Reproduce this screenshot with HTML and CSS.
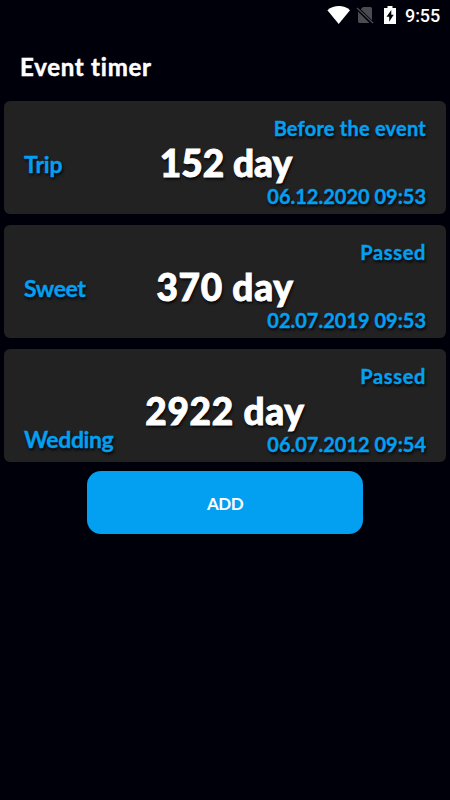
FILE: index.html
```html
<!DOCTYPE html>
<html lang="en">
<head>
<meta charset="utf-8">
<meta name="viewport" content="width=device-width, initial-scale=1">
<title>Event timer</title>
<link rel="stylesheet" href="styles.css">
</head>
<body>
<div class="status">
  <svg class="wifi" width="24" height="18" viewBox="0 0 24 18"><path fill="#fff" d="M.4 4.200C7-1.300 17-1.300 23 4.200L11.700 18Z"/></svg>
  <svg class="sim" width="18" height="18" viewBox="0 0 18 18"><path fill="#4b4b52" d="M7 1h7.500q1.500 0 1.500 1.500v11.700L4.700 3.200ZM2 5.500L13.500 17H3.500Q2 17 2 15.500Z"/><path d="M1 2L17 17" stroke="#4b4b52" stroke-width="1.300"/></svg>
  <svg class="battery" width="12" height="18" viewBox="0 0 12 18"><path fill="#fff" d="M3.500 0h5v2H12v16H0V2h3.500Z"/><path fill="#00000b" d="M7.300 4L2.500 10.700H5.200V15.800L9.700 8.800H7.300Z"/></svg>
  <span class="clock">9:55</span>
</div>
<h1 class="title">Event timer</h1>
<main class="events">
  <section class="card">
    <span class="state before">Before the event</span>
    <span class="name trip">Trip</span>
    <strong class="count days-152">152 day</strong>
    <time class="date">06.12.2020 09:53</time>
  </section>
  <section class="card">
    <span class="state">Passed</span>
    <span class="name sweet">Sweet</span>
    <strong class="count">370 day</strong>
    <time class="date">02.07.2019 09:53</time>
  </section>
  <section class="card">
    <span class="state">Passed</span>
    <span class="name low">Wedding</span>
    <strong class="count">2922 day</strong>
    <time class="date">06.07.2012 09:54</time>
  </section>
</main>
<button class="add">ADD</button>
</body>
</html>
```
FILE: styles.css
```css
* { box-sizing: border-box; }
body {
  margin: 0;
  height: 800px;
  overflow: hidden;
  background: #00000b;
  color: #fff;
  font-family: Lato, "Liberation Sans", sans-serif;
  font-weight: 700;
}
.status {
  display: flex;
  align-items: center;
  height: 32px;
  padding: 0 10px 2px 327px;
}
.status svg { flex: none; }
.sim { margin-left: 5px; }
.battery { margin-left: 10px; }
.clock {
  margin-left: 9px;
  font: 500 18px/20px Roboto, sans-serif;
  letter-spacing: -.1px;
  white-space: nowrap;
  position: relative;
  top: 1px;
}
.title {
  height: 69px;
  margin: 0;
  padding: 20px 20px 0;
  font-size: 24px;
  line-height: 30px;
  letter-spacing: .75px;
  -webkit-text-stroke: .5px;
}
.events {
  display: grid;
  grid-auto-rows: 113px;
  gap: 11px;
  padding: 0 4px;
}
.card {
  display: grid;
  padding: 0 20px;
  border-radius: 6px;
  background: #222;
  text-shadow: 1px 2px 3px #000;
  white-space: nowrap;
}
.card > * { grid-area: 1 / 1; line-height: 24px; }
.state, .date, .name { color: #039ff0; -webkit-text-stroke: .4px; }
.state {
  justify-self: end;
  margin-top: 15px;
  font-size: 20px;
  letter-spacing: .65px;
}
.before { letter-spacing: .22px; }
.name {
  justify-self: start;
  align-self: start;
  margin-top: 51px;
  font-size: 23px;
  letter-spacing: -.4px;
}
.trip { letter-spacing: -.1px; }
.low { margin-top: 78px; }
.card > .count {
  justify-self: center;
  align-self: start;
  margin-top: 40px;
  font-size: 37px;
  line-height: 44px;
  -webkit-text-stroke: .9px;
  letter-spacing: .7px;
}
.card > .days-152 {
  margin-left: 2px;
  letter-spacing: 0;
}
.date {
  justify-self: end;
  align-self: start;
  margin-top: 83px;
  font-size: 20px;
}
.add {
  display: block;
  width: 276px;
  height: 63px;
  margin: 9px auto 0;
  padding: 3px 0 0;
  border: 0;
  border-radius: 14px;
  background: #039ff0;
  color: #fff;
  font: 700 17px/20px Lato, "Liberation Sans", sans-serif;
  letter-spacing: -.5px;
}
```
